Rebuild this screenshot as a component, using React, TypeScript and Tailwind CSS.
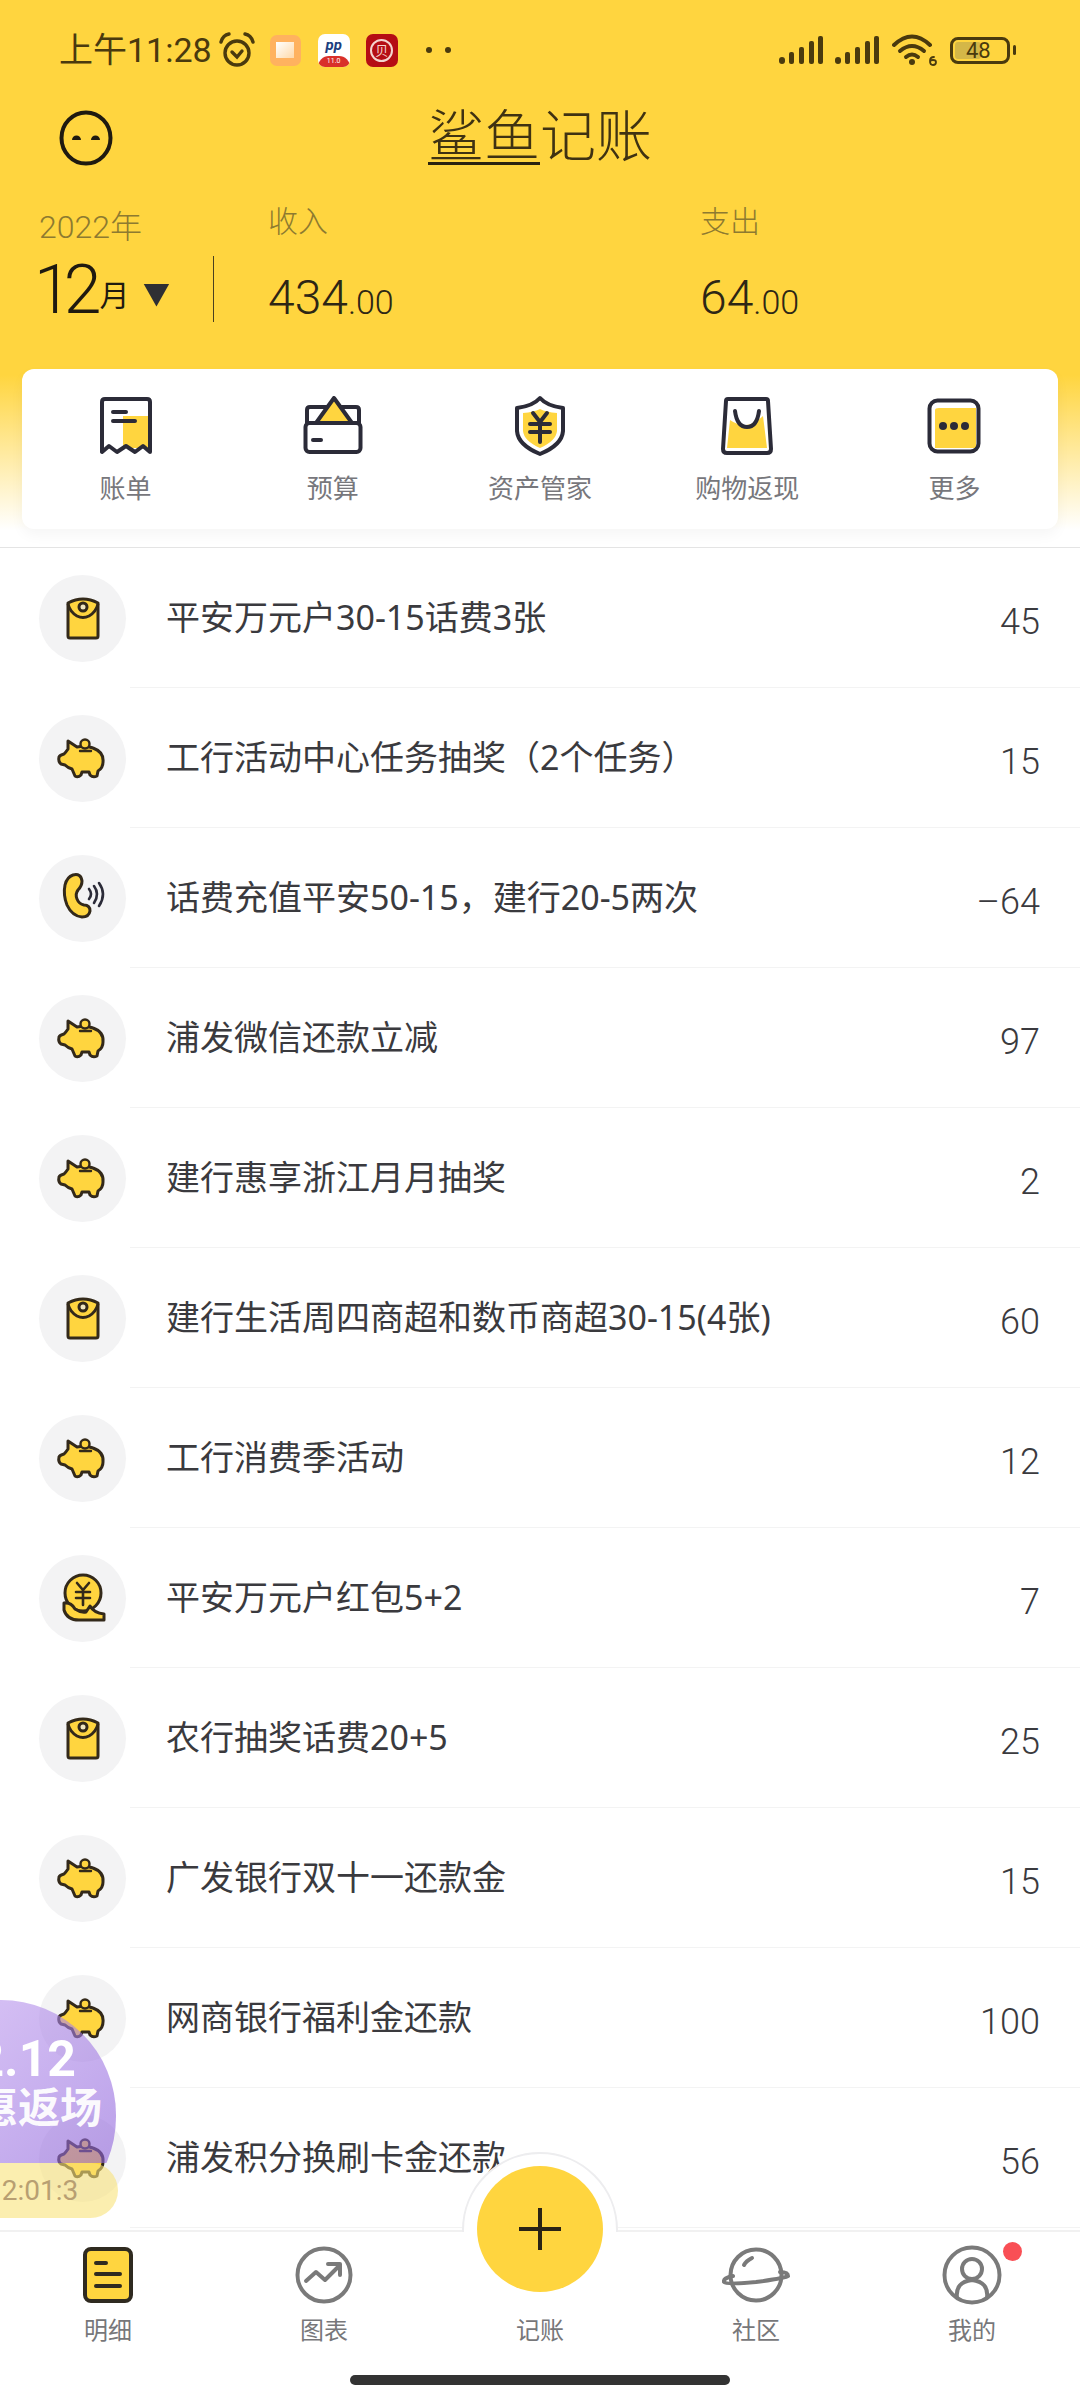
import React from 'react';

const ink = '#33291a';
const navy = '#2b2b38';
const gold = '#ffd53f';
const statusInk = '#4a3a0e';

const NoteIcon = () => (
  <svg width="36" height="46" viewBox="0 0 36 46" fill="none">
    <path d="M3 8 Q18 0 33 8 V41 Q33 43 31 43 H5 Q3 43 3 41 Z" fill={gold} stroke={ink} strokeWidth="3" strokeLinejoin="round" />
    <path d="M3 9 Q5 17 12 21 Q18 24 24 21 Q31 17 33 9" stroke={ink} strokeWidth="3" />
    <circle cx="18" cy="12" r="4" fill="#f0e6c0" stroke={ink} strokeWidth="3" />
  </svg>
);

const PigIcon = () => (
  <svg width="60" height="56" viewBox="0 0 60 56" fill="none">
    <path d="M15 11 L24 17 Q33 15 40 18 Q51 22 50 32 Q50 38 45 41 L44 46 Q40 48 37 45 L36 42 H29 L28 45 Q25 48 22 46 L19 39 Q15 38 12 35 L8 34 Q5 32 6 27 Q7 25 11 24 Q13 22 15 19 Z" fill={gold} stroke={ink} strokeWidth="3" strokeLinejoin="round" />
    <circle cx="32" cy="14" r="4.500" fill={gold} stroke={ink} strokeWidth="2.400" />
    <path d="M27 21 H38" stroke={ink} strokeWidth="2.400" strokeLinecap="round" />
  </svg>
);

const PhoneIcon = () => (
  <svg width="60" height="60" viewBox="0 0 60 60" fill="none">
    <path d="M20 7 Q28 5 29 13 Q29 18 25 22 Q22 26 24 31 Q26 36 31 37 Q37 37 37 43 Q36 49 29 49 Q19 48 14 37 Q10 27 12 17 Q14 9 20 7 Z" fill={gold} stroke={ink} strokeWidth="3" strokeLinejoin="round" />
    <path d="M36 21 Q40 26 36 31 M41 18 Q47 26 41 35 M46 15 Q54 26 46 38" stroke={navy} strokeWidth="2.600" strokeLinecap="round" />
  </svg>
);

const CoinIcon = () => (
  <svg width="60" height="60" viewBox="0 0 60 60" fill="none">
    <circle cx="30" cy="25" r="18" fill={gold} stroke={ink} strokeWidth="3" />
    <path d="M24 15 L30 22 L36 15 M23 24 H37 M23 30 H37 M30 22 V37" stroke={ink} strokeWidth="2.600" strokeLinecap="round" />
    <path d="M11 35 Q18 34 22 41 Q28 45 33 44 L37 38 Q41 45 51 46 V52 H26 Q14 52 11 42 Z" fill={gold} stroke={ink} strokeWidth="3" strokeLinejoin="round" />
  </svg>
);

const rows: { icon: React.ReactNode; name: string; amount: string }[] = [
  { icon: <NoteIcon />, name: '平安万元户30-15话费3张', amount: '45' },
  { icon: <PigIcon />, name: '工行活动中心任务抽奖（2个任务）', amount: '15' },
  { icon: <PhoneIcon />, name: '话费充值平安50-15，建行20-5两次', amount: '–64' },
  { icon: <PigIcon />, name: '浦发微信还款立减', amount: '97' },
  { icon: <PigIcon />, name: '建行惠享浙江月月抽奖', amount: '2' },
  { icon: <NoteIcon />, name: '建行生活周四商超和数币商超30-15(4张)', amount: '60' },
  { icon: <PigIcon />, name: '工行消费季活动', amount: '12' },
  { icon: <CoinIcon />, name: '平安万元户红包5+2', amount: '7' },
  { icon: <NoteIcon />, name: '农行抽奖话费20+5', amount: '25' },
  { icon: <PigIcon />, name: '广发银行双十一还款金', amount: '15' },
  { icon: <PigIcon />, name: '网商银行福利金还款', amount: '100' },
  { icon: <PigIcon />, name: '浦发积分换刷卡金还款', amount: '56' },
];

const Signal = () => (
  <svg width="44" height="28" viewBox="0 0 44 28" fill={statusInk}>
    <rect x="0" y="21" width="6" height="7" rx="3" />
    <rect x="10" y="16" width="5" height="12" rx="2" />
    <rect x="20" y="11" width="5" height="17" rx="2" />
    <rect x="30" y="5" width="5" height="23" rx="2" />
    <rect x="39" y="0" width="5" height="28" rx="2" />
  </svg>
);

const StatusBar = () => (
  <div className="h-[100px] flex items-center pl-[59px] pr-[64px]" style={{ color: statusInk }}>
    <span className="text-[34px] leading-none">上午11:28</span>
    <svg className="ml-[7px]" width="36" height="36" viewBox="0 0 36 36" fill="none" stroke={statusInk} strokeWidth="3.400">
      <circle cx="18" cy="21" r="12" />
      <path d="M13 20 L18 25 L23 19" strokeLinecap="round" />
      <path d="M2 10 Q4 3 10 2 M34 10 Q32 3 26 2" strokeLinecap="round" />
    </svg>
    <div className="ml-[15px] w-[31px] h-[31px] rounded-[7px] bg-[#ffb25f] flex items-center justify-center">
      <div className="w-[18px] h-[16px] bg-gradient-to-br from-white to-[#ffd9a8]" />
    </div>
    <div className="ml-[17px] w-[32px] h-[33px] rounded-[7px] bg-white overflow-hidden flex flex-col">
      <div className="h-[22px] text-center text-[15px] leading-[22px] italic font-bold text-[#1c3f80]">pp</div>
      <div className="h-[11px] rounded-t-full bg-[#d9302a] text-white text-[7px] leading-[11px] text-center">11.0</div>
    </div>
    <div className="ml-[16px] w-[32px] h-[33px] rounded-[7px] bg-[#b50d14] flex items-center justify-center">
      <div className="w-[23px] h-[23px] rounded-full border-2 border-[#f4d5d0] text-[#f4d5d0] text-[13px] leading-[19px] text-center">贝</div>
    </div>
    <div className="ml-[28px] flex gap-[13px]">
      <div className="w-[6px] h-[6px] rounded-full" style={{ background: statusInk }} />
      <div className="w-[6px] h-[6px] rounded-full" style={{ background: statusInk }} />
    </div>
    <div className="ml-auto flex items-center">
      <Signal />
      <div className="w-[12px]" />
      <Signal />
      <svg className="ml-[13px]" width="45" height="32" viewBox="0 0 45 32" fill="none" stroke={statusInk} strokeWidth="4" strokeLinecap="round">
        <path d="M2 11 Q20 -6 38 11" />
        <path d="M8 17 Q20 7 32 17" />
        <path d="M14 23 Q20 18 26 23" />
        <circle cx="20" cy="28" r="3" fill={statusInk} stroke="none" />
        <path d="M42 23 Q38 23 38 27 Q38 31 41 31 Q44 31 44 28 Q44 26 41 26 Q38 26 38 28" strokeWidth="1.800" />
      </svg>
      <div className="ml-[13px] w-[60px] h-[27px] rounded-[8px] border-[3px] border-[#4a3a0e] p-[2px]">
        <div className="relative w-[26px] h-full rounded-[3px] bg-[#d4b748]">
          <span className="absolute left-[11px] top-0 text-[22px] leading-[17px]">48</span>
        </div>
      </div>
      <div className="ml-[3px] w-[3px] h-[10px] rounded-full" style={{ background: statusInk }} />
    </div>
  </div>
);

const QuickBill = () => (
  <svg width="54" height="60" viewBox="0 0 54 60" fill="none">
    <rect x="24" y="20" width="26" height="32" fill={gold} />
    <path d="M3 56 V6 Q3 3 6 3 H48 Q51 3 51 6 V56 L44 50 L36 56 L27 50 L18 56 L10 50 Z" stroke={navy} strokeWidth="4" strokeLinejoin="round" />
    <path d="M14 16 H27 M14 25 H36" stroke={navy} strokeWidth="4" strokeLinecap="round" />
  </svg>
);
const QuickWallet = () => (
  <svg width="60" height="60" viewBox="0 0 60 60" fill="none">
    <path d="M4 30 V14 Q4 11 7 11 H53 Q56 11 56 14 V30" stroke={navy} strokeWidth="4" />
    <path d="M13 27 L31 2 L49 27 Z" fill={gold} stroke={navy} strokeWidth="4" strokeLinejoin="round" />
    <rect x="2.500" y="27" width="55" height="29" rx="4" fill="#fff" stroke={navy} strokeWidth="4" />
    <path d="M10 44 H18" stroke={navy} strokeWidth="4" strokeLinecap="round" />
  </svg>
);
const QuickShield = () => (
  <svg width="52" height="62" viewBox="0 0 52 62" fill="none">
    <path d="M26 3 Q33 11 49 13 V36 Q48 50 26 59 Q4 50 3 36 V13 Q19 11 26 3 Z" fill="#fff" stroke={navy} strokeWidth="4" strokeLinejoin="round" />
    <path d="M9 18 Q20 17 26 14 Q32 17 43 18 V36 Q42 46 26 53 Q10 46 9 36 Z" fill={gold} />
    <path d="M19 18 L26 27 L33 18 M16 29 H36 M16 37 H36 M26 27 V47" stroke={navy} strokeWidth="4" strokeLinecap="round" />
  </svg>
);
const QuickBag = () => (
  <svg width="52" height="60" viewBox="0 0 52 60" fill="none">
    <path d="M9 24 Q26 36 42 20 L46 52 H6 Z" fill={gold} />
    <path d="M7 3 H45 Q47 3 47 5 L50 53 Q50 57 46 57 H6 Q2 57 2 53 L5 5 Q5 3 7 3 Z" stroke={navy} strokeWidth="4" strokeLinejoin="round" />
    <path d="M14 15 Q16 31 26 31 Q36 31 38 15" stroke={navy} strokeWidth="4" strokeLinecap="round" />
  </svg>
);
const QuickMore = () => (
  <svg width="54" height="56" viewBox="0 0 54 56" fill="none">
    <path d="M8 12 Q8 10 12 10 H49 V48 Q49 50 46 50 H8 Z" fill={gold} />
    <rect x="2.500" y="2.500" width="49" height="51" rx="8" stroke={navy} strokeWidth="4" />
    <circle cx="16" cy="28" r="4" fill={navy} />
    <circle cx="27" cy="28" r="4" fill={navy} />
    <circle cx="38" cy="28" r="4" fill={navy} />
  </svg>
);

const quick = [
  { icon: <QuickBill />, label: '账单' },
  { icon: <QuickWallet />, label: '预算' },
  { icon: <QuickShield />, label: '资产管家' },
  { icon: <QuickBag />, label: '购物返现' },
  { icon: <QuickMore />, label: '更多' },
];

const Header = () => (
  <div className="shrink-0 h-[548px] border-b border-[#e4e4e4] bg-[linear-gradient(#ffd53f_0,#ffd53f_375px,#ffffff_530px)]">
    <StatusBar />
    <div className="relative h-[74px] flex items-center justify-center">
      <svg className="absolute left-[59px] top-[10px]" width="54" height="56" viewBox="0 0 54 56" fill="none">
        <ellipse cx="27" cy="28" rx="24.500" ry="25.500" stroke="#1f1a10" strokeWidth="4" />
        <path d="M13 30 a4.500 4.500 0 0 1 9 0 Z M32 30 a4.500 4.500 0 0 1 9 0 Z" fill="#1f1a10" />
      </svg>
      <div className="text-[56px] font-light leading-[54px] text-[#3f3212]">
        <span className="inline-block leading-[50px] border-b-[3px] border-[#2a2310]">鲨鱼</span>记账
      </div>
    </div>
    <div className="h-[195px] flex items-start">
      <div className="w-[213px] pl-[39px] pt-[33px] shrink-0">
        <div className="text-[32px] leading-[40px] font-light text-[#8d7a30]">2022年</div>
        <div className="mt-[3px] -ml-[5px] h-[80px] flex items-center text-[#1f1a10]">
          <span className="text-[68px] leading-none font-light tracking-[-8px]">12</span>
          <span className="ml-[6px] mt-[12px] text-[30px] leading-none">月</span>
          <span className="ml-[14px] mt-[10px] w-[26px] h-[23px] bg-[#2f2f33] [clip-path:polygon(0_0,100%_0,50%_100%)]" />
        </div>
      </div>
      <div className="w-[1px] h-[66px] mt-[82px] bg-[#4a4020] shrink-0" />
      <div className="w-[486px] pl-[54px] pt-[28px] shrink-0">
        <div className="text-[30px] leading-[40px] font-light text-[#8d7a30]">收入</div>
        <div className="mt-[32px] leading-none text-[#2d2615] font-light">
          <span className="text-[48px]">434</span><span className="text-[34px]">.00</span>
        </div>
      </div>
      <div className="pt-[28px]">
        <div className="text-[30px] leading-[40px] font-light text-[#8d7a30]">支出</div>
        <div className="mt-[32px] leading-none text-[#2d2615] font-light">
          <span className="text-[48px]">64</span><span className="text-[34px]">.00</span>
        </div>
      </div>
    </div>
    <div className="mx-[22px] h-[160px] rounded-[12px] bg-white shadow-[0_6px_14px_rgba(0,0,0,0.04)] grid grid-cols-5">
      {quick.map((q) => (
        <div key={q.label} className="flex flex-col items-center">
          <div className="h-[62px] mt-[26px] flex items-center justify-center">{q.icon}</div>
          <div className="mt-[15px] text-[26px] leading-[34px] text-[#77777c]">{q.label}</div>
        </div>
      ))}
    </div>
  </div>
);

const Row = ({ icon, name, amount }: { icon: React.ReactNode; name: string; amount: string }) => (
  <div className="h-[140px] shrink-0 flex items-center pl-[39px]">
    <div className="w-[87px] h-[87px] rounded-full bg-[#f3f3f4] flex items-center justify-center shrink-0">{icon}</div>
    <div className="ml-[4px] flex-1 h-full border-b border-[#f3f3f3] flex items-center pl-[36px] pr-[40px]">
      <span className="flex-1 text-[34px] leading-none text-[#3a3a3e] -mt-[1px] font-['Noto_Sans','Noto_Sans_CJK_SC',sans-serif]">{name}</span>
      <span className="text-[36px] leading-none font-light text-[#3a3a3e] mt-[8px]">{amount}</span>
    </div>
  </div>
);

const NavItem = ({ icon, label }: { icon?: React.ReactNode; label: string }) => (
  <div className="flex flex-col items-center">
    <div className="h-[62px] mt-[12px] flex items-center justify-center">{icon}</div>
    <div className="mt-[9px] text-[24px] leading-[32px] text-[#77777a]">{label}</div>
  </div>
);

const BottomNav = () => (
  <div className="relative shrink-0 h-[170px] bg-white border-t-[2px] border-[#f1f1f1] grid grid-cols-5">
    <NavItem
      label="明细"
      icon={
        <svg width="52" height="58" viewBox="0 0 52 58" fill="none">
          <rect x="3" y="3" width="46" height="52" rx="6" fill={gold} stroke="#2f2a20" strokeWidth="4" />
          <path d="M14 17 H24 M14 28 H38 M14 40 H38" stroke="#2f2a20" strokeWidth="4" strokeLinecap="round" />
        </svg>
      }
    />
    <NavItem
      label="图表"
      icon={
        <svg width="58" height="60" viewBox="0 0 58 60" fill="none" stroke="#7a7a7a" strokeWidth="4">
          <circle cx="29" cy="30" r="26.500" />
          <path d="M11 36 L21 27 L30 35 L44 21 M33 19 H45 V30" strokeLinejoin="round" strokeLinecap="round" />
        </svg>
      }
    />
    <NavItem label="记账" />
    <NavItem
      label="社区"
      icon={
        <svg width="68" height="56" viewBox="0 0 68 56" fill="none" stroke="#7a7a7a" strokeWidth="4">
          <circle cx="34" cy="28" r="25.500" />
          <path d="M11 29 Q1 31 2 35 Q4 38 34 35 Q64 31 66 29 Q66 25 58 25" strokeLinecap="round" />
          <path d="M22 18 Q24 14 30 11" strokeLinecap="round" />
        </svg>
      }
    />
    <NavItem
      label="我的"
      icon={
        <svg width="60" height="62" viewBox="0 0 60 62" fill="none" stroke="#7a7a7a" strokeWidth="4">
          <circle cx="30" cy="31" r="27.500" />
          <circle cx="30" cy="25" r="10" />
          <path d="M15 54 Q13 38 30 36 Q47 38 45 54" />
        </svg>
      }
    />
    <div className="absolute left-[1003px] top-[10px] w-[19px] h-[19px] rounded-full bg-[#f94f55]" />
    <div className="absolute left-[350px] top-[143px] w-[380px] h-[10px] rounded-full bg-[#333333]" />
    <div className="absolute left-[462px] -top-[80px] w-[156px] h-[156px] rounded-full bg-white border-2 border-[#ededef] flex items-center justify-center [clip-path:inset(0_0_76px_0)]" />
    <div className="absolute left-[477px] -top-[66px] w-[126px] h-[126px] rounded-full bg-[#ffd53f] flex items-center justify-center">
      <svg width="44" height="44" viewBox="0 0 44 44" stroke="#2a2315" strokeWidth="4">
        <path d="M22 1 V43 M1 22 H43" />
      </svg>
    </div>
  </div>
);

// 左侧活动浮窗，半透明盖在列表上
const PromoBubble = () => (
  <div className="absolute left-0 top-[2000px] w-[120px] h-[220px] overflow-hidden">
    <div className="absolute left-0 top-0 w-[120px] h-[163px] overflow-hidden">
      <div className="absolute -left-[114px] top-0 w-[230px] h-[232px] rounded-full opacity-60 bg-gradient-to-br from-[#c9a6f2] to-[#8454d6]" />
    </div>
    <div className="absolute left-0 top-[163px] w-[118px] h-[55px] rounded-r-[28px] bg-[#f9e27a]/60 flex items-center overflow-hidden">
      <span className="absolute -left-[14px] text-[28px] leading-none text-[#b89f72] whitespace-nowrap">12:01:3</span>
    </div>
    <div className="absolute right-[44px] top-[34px] text-[50px] leading-[50px] font-bold text-white whitespace-nowrap">2.12</div>
    <div className="absolute right-[18px] top-[84px] text-[42px] leading-[50px] font-bold text-white/95 whitespace-nowrap">惠返场</div>
  </div>
);

export default function App() {
  return (
    <div className="relative w-[1080px] h-[2400px] overflow-hidden bg-white flex flex-col font-['Roboto','Noto_Sans_CJK_SC',sans-serif]">
      <Header />
      <div className="flex-1 min-h-0 overflow-hidden flex flex-col">
        {rows.map((r) => (
          <Row key={r.name} icon={r.icon} name={r.name} amount={r.amount} />
        ))}
      </div>
      <BottomNav />
      <PromoBubble />
    </div>
  );
}
